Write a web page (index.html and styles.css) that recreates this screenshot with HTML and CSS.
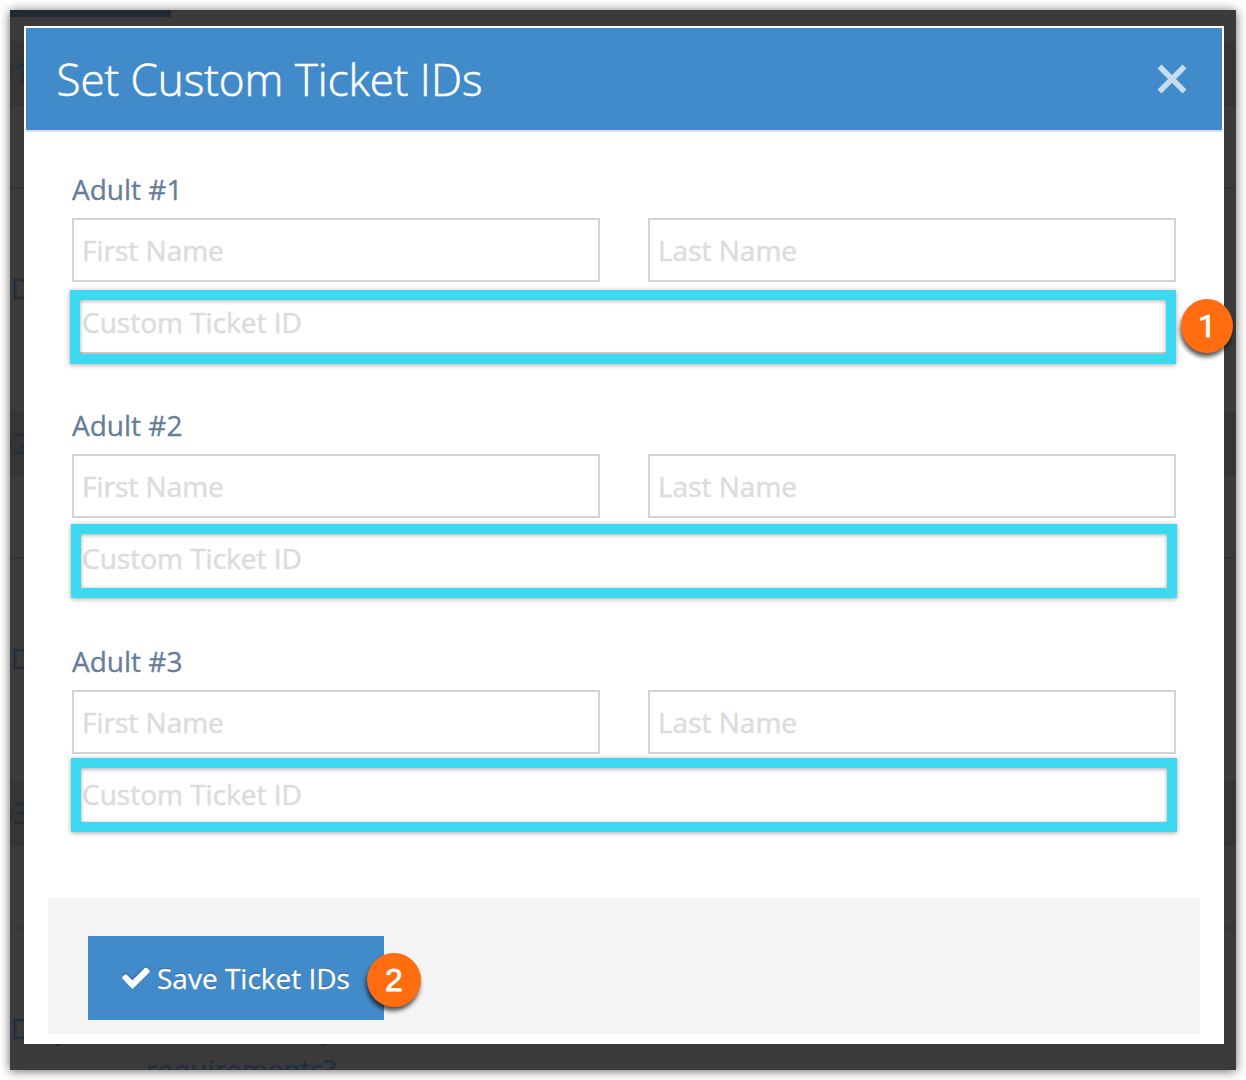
FILE: index.html
```html
<!DOCTYPE html>
<html lang="en">
<head>
<meta charset="utf-8">
<title>Set Custom Ticket IDs</title>
<link rel="stylesheet" href="styles.css">
</head>
<body>
<div class="window">
  <div class="backdrop" aria-hidden="true">
    <div class="tab"></div>
    <section class="order"><div class="order-title">#1</div><div class="order-line"></div><div class="question">D</div></section>
    <section class="order"><div class="order-title">#2</div><div class="order-line"></div><div class="question">D</div></section>
    <section class="order"><div class="order-title">#3</div><div class="order-line"></div><div class="question">Do you have <span class="topic">dietary</span><br><span class="wrap">requirements?</span></div></section>
  </div>
  <main class="modal">
    <header class="header">
      <h1>Set Custom Ticket IDs</h1>
      <svg class="close" viewBox="0 0 30 30"><path d="M2.5 2.5L27.5 27.5M27.5 2.5L2.5 27.5"/></svg>
    </header>
    <form class="tickets">
      <fieldset class="ticket">
        <label>Adult #1</label>
        <div class="names"><input placeholder="First Name"><input placeholder="Last Name"></div>
        <input class="custom" placeholder="Custom Ticket ID">
        <div class="highlight first"><span class="badge one">1</span></div>
      </fieldset>
      <fieldset class="ticket">
        <label>Adult #2</label>
        <div class="names"><input placeholder="First Name"><input placeholder="Last Name"></div>
        <input class="custom" placeholder="Custom Ticket ID">
        <div class="highlight second"></div>
      </fieldset>
      <fieldset class="ticket">
        <label>Adult #3</label>
        <div class="names"><input placeholder="First Name"><input placeholder="Last Name"></div>
        <input class="custom" placeholder="Custom Ticket ID">
        <div class="highlight third"></div>
      </fieldset>
    </form>
    <footer class="footer">
      <button class="save" type="button">
        <svg class="check" viewBox="0 0 28 22"><path d="M0.6 11.7Q-0.3 10.5 0.8 9.3L2.6 7.8Q3.8 6.9 5 7.9L10.4 13.2L22.8 0.9Q24 -0.1 25.1 0.9L27.4 3.2Q28.3 4.3 27.3 5.4L11.6 21Q10.4 22 9.3 21Z"/></svg>
        <span>Save Ticket IDs</span>
        <span class="badge two">2</span>
      </button>
    </footer>
  </main>
</div>
</body>
</html>
```
FILE: styles.css
```css
* { box-sizing: border-box; }
body {
  margin: 0;
  padding: 10px;
  height: 1080px;
  overflow: hidden;
  background: #fff;
  font-family: "Open Sans", "Noto Sans", sans-serif;
  font-size: 28px;
}
.window {
  position: relative;
  width: 1226px;
  height: 1060px;
  padding: 16px 12px 26px 14px;
  background: #3b3b3b;
  box-shadow: 0 1px 10px rgba(0, 0, 0, .6);
}
.backdrop {
  position: absolute;
  inset: 0;
  overflow: hidden;
  color: #22303d;
  line-height: 40px;
  -webkit-text-stroke: .7px #22303d;
}
.tab { width: 161px; height: 7px; margin-bottom: 24px; background: #1f2a34; }
.order { height: 370px; }
.order-title {
  height: 65px;
  padding-top: 12px;
  text-indent: -16.5px;
  background: #353535;
  font-size: 30px;
}
.order-line { height: 2px; margin-top: 81px; background: #353535; }
.question { padding: 79px 0 0 1px; line-height: 41px; white-space: nowrap; }
.question .topic { margin-left: 63px; }
.question .wrap { padding-left: 135px; }
.modal {
  position: relative;
  width: 1200px;
  height: 1018px;
  padding: 2px;
  background: #fff;
}
.header {
  display: flex;
  align-items: center;
  justify-content: space-between;
  height: 104px;
  padding: 0 35px 0 30.5px;
  background: #428bca;
  border-bottom: 2px solid #e0e0e0;
}
.header h1 {
  margin: 0;
  color: #fff;
  font-size: 44px;
  font-weight: 300;
  line-height: 60px;
  letter-spacing: -.06px;
  -webkit-text-stroke: .6px #fff;
}
.close { width: 30px; height: 30px; fill: none; stroke: #c6dcef; stroke-width: 5.5; }
.tickets { padding: 38px 46px 0; }
.ticket {
  position: relative;
  height: 236px;
  margin: 0;
  padding: 0;
  border: 0;
  color: #657d9b;
}
.ticket label { display: block; height: 48px; line-height: 38px; -webkit-text-stroke: .3px #657d9b; }
.names { display: grid; grid-template-columns: 528px 528px; gap: 48px; }
.ticket input {
  width: 100%;
  height: 64px;
  padding: 0 8px;
  border: 2px solid #d4d4d4;
  border-radius: 0;
  outline: none;
  background: #fff;
  font: inherit;
}
.ticket input::placeholder { color: #dcdcdc; opacity: 1; -webkit-text-stroke: .5px #dcdcdc; }
.ticket .custom { display: block; margin-top: 8px; }
.highlight {
  position: absolute;
  left: -1px;
  width: 1106px;
  height: 74px;
  border: 10px solid #3dd9f0;
  box-shadow: 0 1px 5px rgba(0, 0, 0, .35), inset 0 1px 4px rgba(0, 0, 0, .35);
}
.first { top: 120px; left: -2px; }
.second { top: 118px; }
.third { top: 116px; }
.badge {
  position: absolute;
  width: 53px;
  height: 53px;
  border-radius: 50%;
  background: #ff6d10;
  box-shadow: -1px 4px 4px rgba(0, 0, 0, .65);
  color: #fff;
  font: 32px/55px "Liberation Sans", Arial, sans-serif;
  -webkit-text-stroke: .8px #fff;
  text-align: center;
  text-shadow: none;
}
.one { left: 1101px; top: -1px; width: 52px; height: 54px; font-family: Roboto, sans-serif; }
.two { left: 279px; top: 17px; width: 54px; height: 54px; }
.footer {
  width: 1152px;
  height: 136px;
  margin: 20px 0 0 22px;
  padding: 38px 40px;
  background: #f4f4f4;
}
.save {
  position: relative;
  display: flex;
  align-items: center;
  gap: 7px;
  width: 296px;
  height: 84px;
  padding: 0 0 0 34px;
  border: 0;
  background: #428bca;
  color: #fff;
  font: inherit;
  -webkit-text-stroke: .3px #fff;
  text-shadow: 0 -1px 1px rgba(0, 0, 0, .35);
}
.check { width: 28px; height: 22px; fill: #fff; filter: drop-shadow(0 -1px 1px rgba(0, 0, 0, .3)); }
```
